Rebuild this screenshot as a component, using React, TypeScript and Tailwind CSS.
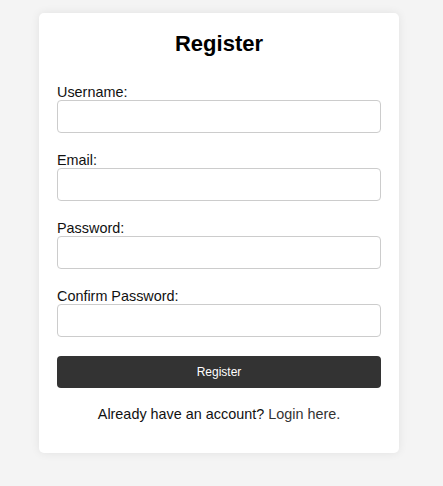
import { useState } from 'react';

const FIELDS = [
  { name: 'username', label: 'Username:', type: 'text' },
  { name: 'email', label: 'Email:', type: 'email' },
  { name: 'password', label: 'Password:', type: 'password' },
  { name: 'confirmPassword', label: 'Confirm Password:', type: 'password' },
];

export default function App() {
  const [form, setForm] = useState<Record<string, string>>({
    username: '',
    email: '',
    password: '',
    confirmPassword: '',
  });

  function handleChange(e: React.ChangeEvent<HTMLInputElement>) {
    setForm((prev) => ({ ...prev, [e.target.name]: e.target.value }));
  }

  return (
    <div className="min-h-[486px] bg-[#f4f4f4] pt-[13px] font-['Liberation_Sans',Arial,sans-serif] text-[#111]">
      <div className="ml-[39px] w-[360px] rounded-[5px] bg-white px-[18px] pt-[18px] pb-[31px] shadow-[0_0_10px_rgba(0,0,0,0.08)]">
        <h2 className="mb-[28px] text-center text-[22px] font-bold leading-[25px] text-black">Register</h2>

        <form onSubmit={(e) => e.preventDefault()}>
          {FIELDS.map((f) => (
            <div key={f.name} className="mb-[19px]">
              <label htmlFor={f.name} className="block text-[14.4px] leading-[16px]">
                {f.label}
              </label>
              <input
                id={f.name}
                name={f.name}
                type={f.type}
                value={form[f.name]}
                onChange={handleChange}
                className="block h-[33px] w-full rounded-[4px] border border-[#ccc] bg-white px-2 text-[14px] outline-none"
              />
            </div>
          ))}

          <button
            type="submit"
            className="block h-[32px] w-full rounded-[4px] bg-[#333] text-[12px] text-white"
          >
            Register
          </button>
        </form>

        <p className="mt-[18px] text-center text-[14.4px] leading-[16px]">
          Already have an account? <a href="#" className="text-[#333]">Login here.</a>
        </p>
      </div>
    </div>
  );
}
